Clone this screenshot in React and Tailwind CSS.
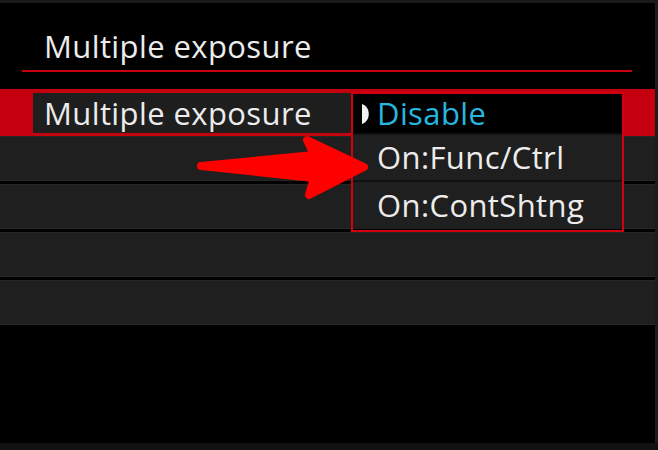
function Row({ children }) {
  return <div className="h-[45px] bg-[#1f1f1f] border-y border-[#262626]">{children}</div>;
}

function MenuItem({ label, active, last }) {
  return (
    <div
      className={
        "flex items-center " +
        (active ? "h-[41px] bg-black" : "h-[47px] bg-[#1f1f1f]") +
        (last ? "" : " border-b-2 border-[#111111]")
      }
    >
      <div className="w-[24px] flex justify-center pl-[2px]">
        {active && (
          <svg width="8" height="20" viewBox="0 0 8 20">
            <path d="M0 0 C9 3 9 17 0 20 Z" fill="#f2f2f2" />
          </svg>
        )}
      </div>
      <span className={"text-[31px] tracking-[0.4px] leading-none " + (active ? "text-[#27b6df]" : "text-[#ececec]")}>
        {label}
      </span>
    </div>
  );
}

export default function App() {
  return (
    <div
      className="relative w-[658px] h-[450px] bg-black overflow-hidden flex flex-col"
      style={{ fontFamily: '"Open Sans", "Noto Sans", sans-serif' }}
    >
      <div className="h-[3px] bg-[#1a1a1a]" />
      <div className="flex flex-1">
        <div className="flex-1 flex flex-col">
          {/* title */}
          <div className="h-[86px] flex flex-col">
            <div className="pl-[44px] pt-[28px] text-[31px] tracking-[0.4px] leading-none text-[#ececec]">Multiple exposure</div>
            <div className="mt-[8px] ml-[22px] w-[610px] h-[2px] bg-[#c8000f]" />
          </div>
          {/* selected row */}
          <div className="h-[47px] bg-[#c4000f] pt-[4px] pb-[3px] pl-[33px] pr-[33px]">
            <div className="h-full bg-[#1e1e1e] flex items-center pl-[11px] text-[31px] tracking-[0.4px] leading-none text-[#ececec]">
              Multiple exposure
            </div>
          </div>
          <div className="flex flex-col gap-[3px] pt-0">
            <Row />
            <Row />
            <Row />
            <Row />
          </div>
          <div className="flex-1" />
        </div>
        <div className="w-[3px] bg-[#1c1c1c]" />
      </div>
      <div className="h-[7px] bg-[#111111]" />

      {/* dropdown */}
      <div className="absolute left-[351px] top-[92px] w-[273px] h-[140px] border-2 border-[#d2000f] bg-black flex flex-col">
        <MenuItem label="Disable" active />
        <MenuItem label="On:Func/Ctrl" />
        <MenuItem label="On:ContShtng" last />
      </div>

      {/* arrow */}
      <svg className="absolute left-0 top-0 pointer-events-none" width="658" height="450" viewBox="0 0 658 450">
        <path
          d="M201 166 L314 155 L307 140 L364 167 L309 195 L314 178 Z"
          fill="#ff0000"
          stroke="#ff0000"
          strokeWidth="8"
          strokeLinejoin="round"
        />
      </svg>
    </div>
  );
}
